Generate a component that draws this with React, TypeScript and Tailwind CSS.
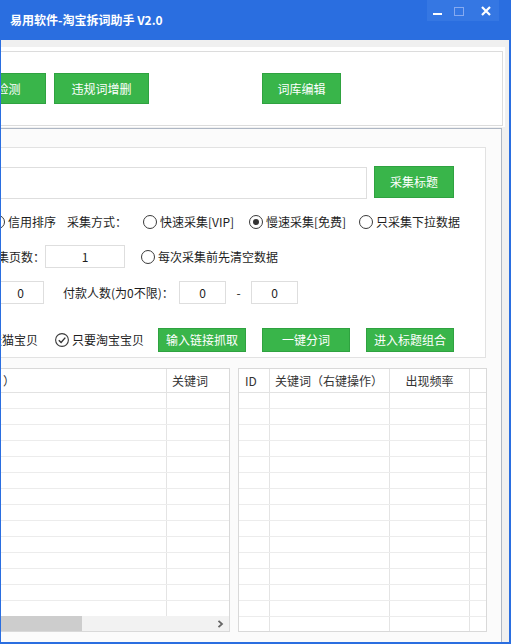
import React from "react";

function Radio({ checked }: { checked?: boolean }) {
  return (
    <span className="w-[14px] h-[14px] rounded-full border border-[#3a3a3a] bg-white flex items-center justify-center shrink-0">
      {checked && <span className="w-[6px] h-[6px] rounded-full bg-[#333]" />}
    </span>
  );
}

function CheckCircle({ checked }: { checked?: boolean }) {
  return (
    <svg width="14" height="14" viewBox="0 0 14 14" className="shrink-0">
      <circle cx="7" cy="7" r="6.4" fill="white" stroke="#3a3a3a" strokeWidth="1.1" />
      {checked && (
        <path d="M3.8 7.2 L6.1 9.5 L10.3 4.6" fill="none" stroke="#333" strokeWidth="1.4" />
      )}
    </svg>
  );
}

function GBtn({ children, className }: { children: React.ReactNode; className: string }) {
  return (
    <div
      className={
        "bg-[#39b54a] border border-[#2fa240] text-white text-[12px] flex items-center justify-center shrink-0 " +
        className
      }
    >
      {children}
    </div>
  );
}

export default function App() {
  const leftRows = Array.from({ length: 14 });
  const rightRows = Array.from({ length: 16 });
  return (
    <div className="w-[511px] h-[644px] overflow-hidden bg-[#f0f0f0] font-['Noto_Sans_CJK_SC',sans-serif] text-[12px] text-[#1e1e1e] leading-none select-none">
      {/* title bar */}
      <div className="h-[40px] bg-[#2a6ee0] flex items-start">
        <div className="pl-[10px] h-[40px] flex items-center text-white font-bold text-[12px]">
          易用软件-淘宝拆词助手 V2.0
        </div>
        <div className="ml-auto mr-[12px] flex h-[21px]">
          <div className="w-[21px] h-[21px] bg-[#3577e3] flex items-center justify-center">
            <span className="w-[9px] h-[2px] bg-white mt-[7px]" />
          </div>
          <div className="w-[21px] h-[21px] bg-[#3577e3] flex items-center justify-center">
            <span className="w-[10px] h-[9px] border border-[#86aaf0] mt-[1px]" />
          </div>
          <div className="w-[30px] h-[21px] bg-[#3577e3] flex items-center justify-center">
            <svg width="10" height="10" viewBox="0 0 10 10" className="ml-[3px] mt-[1px]">
              <path d="M1 1L9 9M9 1L1 9" stroke="white" strokeWidth="2.2" />
            </svg>
          </div>
        </div>
      </div>

      {/* body */}
      <div className="h-[604px] border-l border-r-2 border-b-2 border-[#2a6ee0] pt-[7px] flex flex-col">
        {/* top panel */}
        <div className="h-[80px] bg-white mr-[4px] pt-[4px] pr-[2px] shrink-0">
          <div className="h-[75px] border-y border-r border-[#dcdcdc] flex items-center overflow-hidden">
            <div className="flex items-center ml-[-66px]">
              <GBtn className="w-[111px] h-[31px]">违规词检测</GBtn>
              <GBtn className="w-[95px] h-[31px] ml-[8px]">违规词增删</GBtn>
              <GBtn className="w-[79px] h-[31px] ml-[113px]">词库编辑</GBtn>
            </div>
          </div>
        </div>

        {/* group box */}
        <div className="mt-[1px] flex-1 w-[501px] bg-[#fbfbfb] border-t border-r border-[#aeb7c4] pt-[18px] pr-[15px] overflow-hidden flex flex-col">
          {/* inner panel */}
          <div className="h-[211px] shrink-0 bg-white border-y border-r border-[#e2e2e2] pt-[19px] overflow-hidden">
            {/* row 1 */}
            <div className="flex h-[32px]">
              <div className="w-[366px] h-[32px] bg-white border-y border-r border-[#dedede]" />
              <GBtn className="w-[80px] h-[32px] ml-[7px] mt-[-1px]">采集标题</GBtn>
            </div>
            {/* row 2 */}
            <div className="flex items-center h-[46px] ml-[-10px] whitespace-nowrap">
              <div className="w-[65px] flex items-center gap-[3px] shrink-0">
                <Radio />
                <span>信用排序</span>
              </div>
              <div className="ml-[11px] w-[76px] shrink-0">采集方式：</div>
              <div className="w-[106px] flex items-center gap-[3px] shrink-0">
                <Radio />
                <span>快速采集[VIP]</span>
              </div>
              <div className="w-[110px] flex items-center gap-[3px] shrink-0">
                <Radio checked />
                <span>慢速采集[免费]</span>
              </div>
              <div className="flex items-center gap-[3px] shrink-0">
                <Radio />
                <span>只采集下拉数据</span>
              </div>
            </div>
            {/* row 3 */}
            <div className="flex items-center h-[23px] ml-[-16px] whitespace-nowrap">
              <div className="w-[60px] shrink-0">采集页数：</div>
              <div className="w-[80px] h-[23px] border border-[#dedede] bg-white flex items-center justify-center shrink-0">
                1
              </div>
              <div className="ml-[16px] flex items-center gap-[3px] shrink-0">
                <Radio />
                <span>每次采集前先清空数据</span>
              </div>
            </div>
            {/* row 4 */}
            <div className="flex items-center h-[23px] mt-[13px] ml-[-4px] whitespace-nowrap">
              <div className="w-[47px] h-[23px] border border-[#dedede] bg-white flex items-center justify-center shrink-0">
                0
              </div>
              <div className="ml-[19px] w-[116px] shrink-0">付款人数(为0不限)：</div>
              <div className="w-[47px] h-[23px] border border-[#dedede] bg-white flex items-center justify-center shrink-0">
                0
              </div>
              <div className="w-[25px] text-center shrink-0">-</div>
              <div className="w-[47px] h-[23px] border border-[#dedede] bg-white flex items-center justify-center shrink-0">
                0
              </div>
            </div>
            {/* row 5 */}
            <div className="flex items-center h-[24px] mt-[24px] ml-[-28px] whitespace-nowrap">
              <div className="w-[65px] flex items-center gap-[3px] shrink-0">
                <CheckCircle />
                <span>天猫宝贝</span>
              </div>
              <div className="ml-[17px] w-[103px] flex items-center gap-[3px] shrink-0">
                <CheckCircle checked />
                <span>只要淘宝宝贝</span>
              </div>
              <GBtn className="w-[88px] h-[24px]">输入链接抓取</GBtn>
              <GBtn className="w-[88px] h-[24px] ml-[16px]">一键分词</GBtn>
              <GBtn className="w-[88px] h-[24px] ml-[16px]">进入标题组合</GBtn>
            </div>
          </div>

          {/* tables */}
          <div className="mt-[10px] flex h-[264px] shrink-0">
            {/* left table */}
            <div className="w-[229px] h-[264px] bg-white border-y border-r border-[#d9d9d9] flex flex-col overflow-hidden shrink-0">
              <div className="flex-1 overflow-hidden">
                <div className="ml-[-236px] w-[465px] text-[#333]">
                  <div className="flex h-[24px] border-b border-[#e2e2e2] whitespace-nowrap">
                    <div className="w-[402px] border-r border-[#e2e2e2] flex items-center justify-center">
                      <span>标题（右键操作</span>
                      <span className="ml-[3px]">）</span>
                    </div>
                    <div className="w-[63px] flex items-center pl-[5px]">关键词</div>
                  </div>
                  {leftRows.map((_, i) => (
                    <div key={i} className="flex h-[16px] border-b border-[#ececec]">
                      <div className="w-[402px] border-r border-[#e4e4e4]" />
                      <div className="w-[63px]" />
                    </div>
                  ))}
                </div>
              </div>
              <div className="h-[15px] bg-[#f2f2f2] flex items-center shrink-0">
                <div className="w-[81px] h-[15px] bg-[#cdcdcd]" />
                <svg width="7" height="8" viewBox="0 0 7 8" className="ml-auto mr-[5px]">
                  <path d="M1.5 0.8 L5 4 L1.5 7.2" fill="none" stroke="#666" strokeWidth="1.8" />
                </svg>
              </div>
            </div>

            {/* right table */}
            <div className="ml-[8px] w-[249px] h-[264px] bg-white border border-[#d9d9d9] overflow-hidden shrink-0 text-[#333]">
              <div className="flex h-[24px] border-b border-[#e2e2e2] whitespace-nowrap">
                <div className="w-[31px] border-r border-[#e2e2e2] flex items-center pl-[6px]">ID</div>
                <div className="w-[120px] border-r border-[#e2e2e2] flex items-center pl-[5px]">
                  关键词（右键操作）
                </div>
                <div className="w-[80px] border-r border-[#e2e2e2] flex items-center justify-center">
                  出现频率
                </div>
                <div className="flex-1" />
              </div>
              {rightRows.map((_, i) => (
                <div key={i} className="flex h-[16px] border-b border-[#ececec]">
                  <div className="w-[31px] border-r border-[#e4e4e4]" />
                  <div className="w-[120px] border-r border-[#e4e4e4]" />
                  <div className="w-[80px] border-r border-[#e4e4e4]" />
                  <div className="flex-1" />
                </div>
              ))}
            </div>
          </div>
        </div>
      </div>
    </div>
  );
}
